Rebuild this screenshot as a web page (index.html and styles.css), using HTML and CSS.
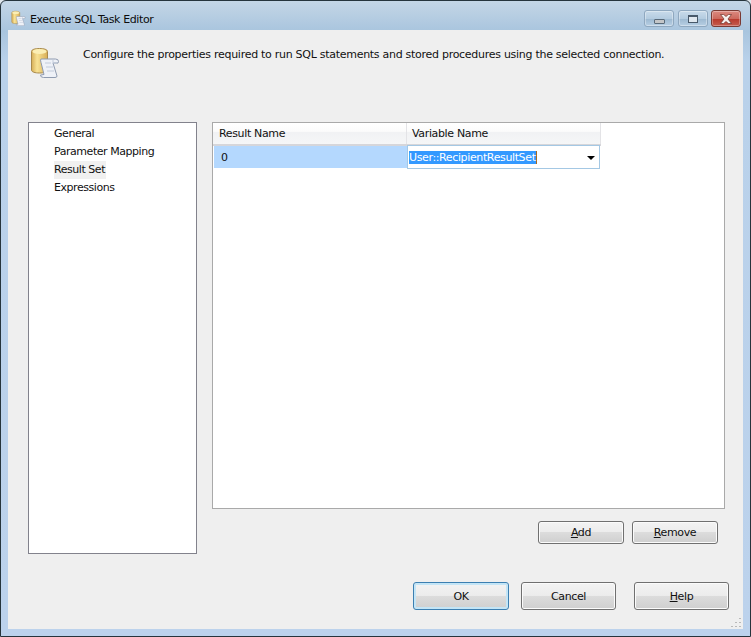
FILE: index.html
```html
<!DOCTYPE html>
<html lang="en">
<head>
<meta charset="utf-8">
<title>Execute SQL Task Editor</title>
<link rel="stylesheet" href="styles.css">
</head>
<body>
<div class="window">
  <div class="titlebar">
    <svg class="title-icon" width="16" height="16" viewBox="0 0 32 32">
      <use href="#task-icon"/>
    </svg>
    <span class="title-text">Execute SQL Task Editor</span>
    <div class="controls">
      <div class="ctl ctl-min"><span class="glyph-min"></span></div>
      <div class="ctl ctl-max"><span class="glyph-max"></span></div>
      <div class="ctl-close">
        <svg width="12" height="10" viewBox="0 0 12 10"><path d="M.5.5h3.200L6 2.500 8.300.5h3.200L8 5l3.500 4.500H8.300L6 7.500 3.700 9.500H.5L4 5z" fill="#f6f1ef" stroke="#6d3028" stroke-width=".7"/></svg>
      </div>
    </div>
  </div>
  <div class="content">
    <div class="header">
      <svg class="header-icon" width="32" height="32" viewBox="0 0 32 32">
        <defs>
          <linearGradient id="cyl" x1="0" x2="1" y1="0" y2="0">
            <stop offset="0" stop-color="#d6ae58"/><stop offset=".35" stop-color="#f8e294"/><stop offset="1" stop-color="#d8ad55"/>
          </linearGradient>
          <g id="task-icon">
            <path d="M3.500 5.500C3.500 3.500 7 2.500 11.500 2.500s8 1 8 3V24c0 2-3.500 3-8 3s-8-1-8-3z" fill="url(#cyl)" stroke="#a98a4c"/>
            <ellipse cx="11.500" cy="5.500" rx="7" ry="2.500" fill="#fbeeb4"/>
            <path d="M13 13h14.500q3 0 3 2.500t-2.500 1.500h-3l4 13q0 1.500-2 1.500H15.500q-3 0-3-2.500l3.500-.5-3-12q-1-3 0-3.500z" fill="#eef1f7" stroke="#8f9bb0"/>
            <path d="M25 13.500v3.500h4M17 17h6M18 21h7M19 25h7" fill="none" stroke="#c2cbda"/>
          </g>
        </defs>
        <use href="#task-icon"/>
      </svg>
      <p class="desc">Configure the properties required to run SQL statements and stored procedures using the selected connection.</p>
    </div>
    <div class="main">
      <ul class="nav">
        <li class="nav-item">General</li>
        <li class="nav-item">Parameter Mapping</li>
        <li class="nav-item nav-selected">Result Set</li>
        <li class="nav-item">Expressions</li>
      </ul>
      <div class="right">
        <div class="grid">
          <div class="grid-head">
            <div class="col col-a">Result Name</div>
            <div class="col col-b">Variable Name</div>
          </div>
          <div class="grid-row">
            <div class="cell-name">0</div>
            <div class="cell-var">
              <span class="sel">User::RecipientResultSet</span>
              <span class="arrow"></span>
            </div>
          </div>
        </div>
        <div class="grid-actions">
          <button class="btn btn-small"><u>A</u>dd</button>
          <button class="btn btn-small"><u>R</u>emove</button>
        </div>
      </div>
    </div>
    <div class="footer">
      <button class="btn btn-big btn-default">OK</button>
      <button class="btn btn-big">Cancel</button>
      <button class="btn btn-big btn-help"><u>H</u>elp</button>
    </div>
    <svg class="grip" width="12" height="12" viewBox="0 0 12 12">
      <path d="M9 2h2v1H9zM5 6h2v1H5zM9 6h2v1H9zM1 10h2v1H1zM5 10h2v1H5zM9 10h2v1H9z" fill="#b9b9b9"/>
    </svg>
  </div>
</div>
</body>
</html>
```
FILE: styles.css
```css
* { box-sizing: border-box; }
html, body { margin: 0; padding: 0; background: #dfe6ec; }
body { width: 751px; height: 637px; overflow: hidden; font-family: "DejaVu Sans", sans-serif; font-size: 11px; color: #111; }
.window {
  width: 751px; height: 637px; display: flex; flex-direction: column;
  padding: 0 7px 7px;
  border: 1px solid #26343c; border-radius: 6px 6px 0 0;
  background: linear-gradient(180deg, #c4d6e6 0, #a9c5de 30px, #b9d1ea 60px, #bcd2ec 100%);
}
.titlebar { height: 29px; flex: none; display: flex; align-items: center; position: relative; }
.title-icon { margin: 4px 4px 0 2px; flex: none; }
.title-text { font-size: 11px; letter-spacing: -.4px; color: #0c0c0c; margin-top: 7px; }
.controls { position: absolute; right: 2px; top: 0; display: flex; gap: 4px; align-items: flex-start; }
.ctl, .ctl-close {
  height: 17px; margin-top: 9px; border-radius: 3px; display: flex; align-items: center; justify-content: center;
}
.ctl {
  width: 30px; border: 1px solid #8fa8bf;
  background: linear-gradient(180deg, #c9dbea 0, #b4cce0 50%, #9cb8d0 51%, #b7cfe4 100%);
  box-shadow: inset 0 0 0 1px rgba(255,255,255,.35);
}
.ctl-close {
  width: 30px; margin-left: -1px; border: 1px solid #7a3a33;
  background: linear-gradient(180deg, #dc8a80 0, #cd6a5e 50%, #b8382b 51%, #c55d4f 100%);
  box-shadow: inset 0 0 0 1px rgba(255,255,255,.3);
}
.glyph-min { width: 11px; height: 5px; margin-top: 5px; background: #c4c6c8; border: 1px solid #5a6b7a; border-radius: 1px; }
.glyph-max { width: 10px; height: 8px; border: 1px solid #48596a; border-top-width: 2px; background: #dfe7ee; }
.content { flex: 1; background: #efefef; display: flex; flex-direction: column; position: relative; min-height: 0; padding: 0 0 0 20px; }
.header { height: 92px; flex: none; display: flex; align-items: flex-start; }
.header-icon { margin: 16px 0 0 0; flex: none; }
.desc { margin: 18px 0 0 23px; font-size: 11px; letter-spacing: -.28px; line-height: 14px; white-space: nowrap; }
.main { display: flex; gap: 15px; flex: none; }
.nav {
  width: 169px; height: 432px; margin: 0; padding: 2px 0 0 25px; list-style: none; flex: none;
  background: #fff; border: 1px solid #82828c;
}
.nav-item { height: 18px; line-height: 17px; letter-spacing: -.45px; width: fit-content; }
.nav-selected { background: #f0f0f0; padding-right: 1px; }
.right { width: 513px; flex: none; display: flex; flex-direction: column; }
.grid { height: 387px; background: #fff; border: 1px solid #a9a9a9; position: relative; }
.grid-head { display: flex; height: 23px; width: 388px; background: linear-gradient(180deg, #fff 0, #fbfbfb 40%, #f1f2f4 45%, #f5f6f7 100%); border-bottom: 2px solid #d6d6da; }
.col { line-height: 22px; letter-spacing: -.35px; padding-left: 6px; }
.col-a { width: 194px; border-right: 1px solid #e3e3e6; }
.col-b { width: 194px; padding-left: 5px; border-right: 1px solid #e3e3e6; }
.grid-row { display: flex; height: 22px; position: relative; padding-left: 1px; }
.cell-name { width: 193px; background: #b4d8fe; line-height: 24px; padding-left: 7px; }
.cell-var {
  position: absolute; left: 194px; top: -1px; width: 193px; height: 24px; background: #fff;
  border: 1px solid #a4c8e4; display: flex; align-items: center; padding-left: 1px;
}
.sel { background: #3399ff; color: #fff; letter-spacing: -.37px; height: 13px; line-height: 13px; border-right: 1px solid #a86a20; }
.arrow { position: absolute; right: 4px; top: 10px; width: 0; height: 0; border-left: 4px solid transparent; border-right: 4px solid transparent; border-top: 4px solid #000; }
.grid-actions { display: flex; justify-content: flex-end; gap: 8px; margin: 12px 7px 0 0; }
.btn {
  font-family: inherit; font-size: 11px; letter-spacing: -.35px; color: #111; padding: 0; margin: 0; text-align: center;
  border: 1px solid #707070; border-radius: 3px;
  background: linear-gradient(180deg, #f3f3f3 0, #ececec 48%, #dcdcdc 50%, #cfcfcf 100%);
  box-shadow: inset 0 0 0 1px #fbfbfb;
}
.btn-small { width: 86px; height: 23px; }
.btn-big { width: 95px; height: 28px; }
.footer { display: flex; margin: 28px 14px 0 0; justify-content: flex-end; gap: 13px; }
.btn-default { width: 96px; margin-right: -1px; border-color: #3c7fb1; box-shadow: inset 0 0 0 2px #c4e5f6; }
.btn-help { margin-left: 5px; }
.grip { position: absolute; right: 1px; bottom: 1px; }
```
